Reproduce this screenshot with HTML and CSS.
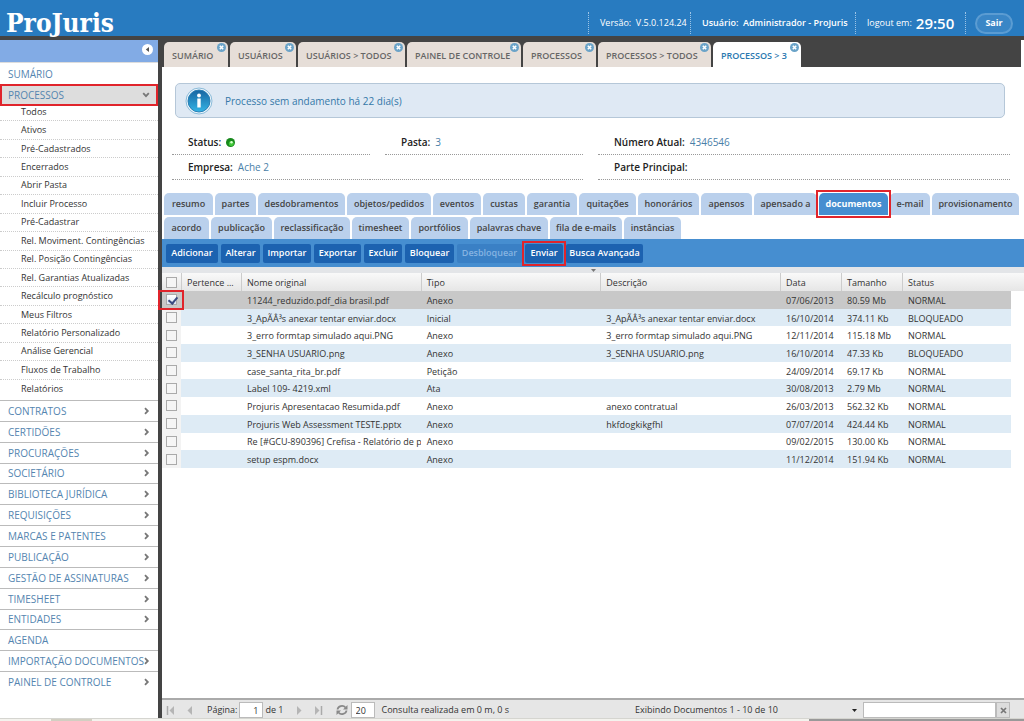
FILE: index.html
```html
<!DOCTYPE html>
<html lang="pt-BR">
<head>
<meta charset="utf-8">
<title>ProJuris</title>
<link rel="stylesheet" href="styles.css">
</head>
<body>
<svg class="defs" aria-hidden="true">
  <defs>
    <symbol id="close" viewBox="0 0 9 9"><circle cx="4.5" cy="4.5" r="4.5" fill="#6aa3c8"/><path d="M2.8 2.8l3.4 3.4M6.2 2.8L2.8 6.2" stroke="#fff" stroke-width="1.6"/></symbol>
    <symbol id="chev" viewBox="0 0 6 8"><path d="M1 1.2L3.8 4 1 6.8" fill="none" stroke="#777" stroke-width="1.8"/></symbol>
  </defs>
</svg>
<header class="top">
  <h1 class="logo">ProJuris</h1>
  <div class="top-info">
    <span class="cell version">Versão:&nbsp; V.5.0.124.24</span>
    <span class="cell user">Usuário:&nbsp; Administrador - ProJuris</span>
    <span class="cell timer">logout em: <b>29:50</b></span>
    <span class="cell exit"><button class="sair" type="button">Sair</button></span>
  </div>
</header>
<div class="shell">
  <nav class="side">
    <div class="side-top"><button class="collapse" type="button" aria-label="Recolher menu"><svg viewBox="0 0 11 11"><circle cx="5.5" cy="5.5" r="5.5" fill="#fff"/><path d="M7 3v5L3.8 5.500z" fill="#555"/></svg></button></div>
    <a class="item first" href="#">SUMÁRIO</a>
    <a class="item open" href="#">PROCESSOS<svg class="down" viewBox="0 0 8 6"><path d="M1.200 1.200L4 4.200 6.800 1.200" fill="none" stroke="#777" stroke-width="1.800"/></svg></a>
    <ul class="sub">
      <li><a href="#">Todos</a></li><li><a href="#">Ativos</a></li><li><a href="#">Pré-Cadastrados</a></li><li><a href="#">Encerrados</a></li>
      <li><a href="#">Abrir Pasta</a></li><li><a href="#">Incluir Processo</a></li><li><a href="#">Pré-Cadastrar</a></li><li><a href="#">Rel. Moviment. Contingências</a></li>
      <li><a href="#">Rel. Posição Contingências</a></li><li><a href="#">Rel. Garantias Atualizadas</a></li><li><a href="#">Recálculo prognóstico</a></li><li><a href="#">Meus Filtros</a></li>
      <li><a href="#">Relatório Personalizado</a></li><li><a href="#">Análise Gerencial</a></li><li><a href="#">Fluxos de Trabalho</a></li><li><a href="#">Relatórios</a></li>
    </ul>
    <div class="groups">
      <a class="item" href="#">CONTRATOS<svg class="chev"><use href="#chev"/></svg></a>
      <a class="item" href="#">CERTIDÕES<svg class="chev"><use href="#chev"/></svg></a>
      <a class="item" href="#">PROCURAÇÕES<svg class="chev"><use href="#chev"/></svg></a>
      <a class="item" href="#">SOCIETÁRIO<svg class="chev"><use href="#chev"/></svg></a>
      <a class="item" href="#">BIBLIOTECA JURÍDICA<svg class="chev"><use href="#chev"/></svg></a>
      <a class="item" href="#">REQUISIÇÕES<svg class="chev"><use href="#chev"/></svg></a>
      <a class="item" href="#">MARCAS E PATENTES<svg class="chev"><use href="#chev"/></svg></a>
      <a class="item" href="#">PUBLICAÇÃO<svg class="chev"><use href="#chev"/></svg></a>
      <a class="item" href="#">GESTÃO DE ASSINATURAS<svg class="chev"><use href="#chev"/></svg></a>
      <a class="item" href="#">TIMESHEET<svg class="chev"><use href="#chev"/></svg></a>
      <a class="item" href="#">ENTIDADES<svg class="chev"><use href="#chev"/></svg></a>
      <a class="item" href="#">AGENDA</a>
      <a class="item" href="#">IMPORTAÇÃO DOCUMENTOS<svg class="chev"><use href="#chev"/></svg></a>
      <a class="item" href="#">PAINEL DE CONTROLE<svg class="chev"><use href="#chev"/></svg></a>
    </div>
  </nav>
  <main class="main">
    <div class="tabs">
      <a class="tab" href="#">SUMÁRIO<svg><use href="#close"/></svg></a>
      <a class="tab" href="#">USUÁRIOS<svg><use href="#close"/></svg></a>
      <a class="tab" href="#">USUÁRIOS &gt; TODOS<svg><use href="#close"/></svg></a>
      <a class="tab" href="#">PAINEL DE CONTROLE<svg><use href="#close"/></svg></a>
      <a class="tab" href="#">PROCESSOS<svg><use href="#close"/></svg></a>
      <a class="tab" href="#">PROCESSOS &gt; TODOS<svg><use href="#close"/></svg></a>
      <a class="tab active" href="#">PROCESSOS &gt; 3<svg><use href="#close"/></svg></a>
    </div>
    <div class="notice">
      <svg class="info" viewBox="0 0 28 28"><defs><linearGradient id="ig" x1="0" y1="0" x2="0" y2="1"><stop offset="0" stop-color="#1764a0"/><stop offset="1" stop-color="#35b5e6"/></linearGradient></defs><circle cx="14" cy="14" r="13" fill="#eef6fc" stroke="#8bbbd9"/><circle cx="14" cy="14" r="11" fill="url(#ig)" stroke="#2a7fb5"/><circle cx="14" cy="8.500" r="1.900" fill="#fff"/><path d="M12.300 11.500h3.400v9h-3.400z" fill="#fff"/></svg>
      <span>Processo sem andamento há 22 dia(s)</span>
    </div>
    <dl class="facts">
      <div class="fact"><dt>Status:</dt><dd><svg class="led" viewBox="0 0 9 9"><circle cx="4.500" cy="4.500" r="4.500" fill="#17891c"/><circle cx="5.300" cy="5.500" r="2.500" fill="#43c93a"/><circle cx="5.500" cy="4.300" r="1.200" fill="#d9ffd0"/></svg></dd></div>
      <div class="fact"><dt>Pasta:</dt><dd>3</dd></div>
      <div class="fact"><dt>Número Atual:</dt><dd>4346546</dd></div>
      <div class="fact"><dt>Empresa:</dt><dd>Ache 2</dd></div>
      <div class="fact blank"></div>
      <div class="fact"><dt>Parte Principal:</dt><dd></dd></div>
    </dl>
    <div class="subtabs row1">
      <a href="#">resumo</a><a href="#">partes</a><a href="#">desdobramentos</a><a href="#">objetos/pedidos</a><a href="#">eventos</a><a href="#">custas</a><a href="#">garantia</a><a href="#">quitações</a><a href="#">honorários</a><a href="#">apensos</a><a href="#">apensado a</a><a class="on marked" href="#">documentos</a><a href="#">e-mail</a><a href="#">provisionamento</a>
    </div>
    <div class="subtabs row2">
      <a href="#">acordo</a><a href="#">publicação</a><a href="#">reclassificação</a><a href="#">timesheet</a><a href="#">portfólios</a><a href="#">palavras chave</a><a href="#">fila de e-mails</a><a href="#">instâncias</a>
    </div>
    <div class="toolbar">
      <button type="button">Adicionar</button><button type="button">Alterar</button><button type="button">Importar</button><button type="button">Exportar</button><button type="button">Excluir</button><button type="button">Bloquear</button><button type="button" disabled>Desbloquear</button><button type="button" class="marked">Enviar</button><button type="button">Busca Avançada</button>
    </div>
    <div class="grip"><svg viewBox="0 0 5 3"><path d="M0 0h5L2.500 3z" fill="#777"/></svg></div>
    <div class="grid">
      <table>
        <colgroup><col class="c-check"><col class="c-own"><col><col><col><col class="c-date"><col class="c-size"><col class="c-status"></colgroup>
        <thead><tr><th><input type="checkbox" aria-label="Selecionar todos"></th><th>Pertence ...</th><th>Nome original</th><th>Tipo</th><th>Descrição</th><th>Data</th><th>Tamanho</th><th>Status</th></tr></thead>
        <tbody>
          <tr class="sel"><td class="marked"><input type="checkbox" checked aria-label="Selecionar linha 1"></td><td></td><td>11244_reduzido.pdf_dia brasil.pdf</td><td>Anexo</td><td></td><td>07/06/2013</td><td>80.59 Mb</td><td>NORMAL</td></tr>
          <tr><td><input type="checkbox" aria-label="Selecionar linha 2"></td><td></td><td>3_ApÃÂ³s anexar tentar enviar.docx</td><td>Inicial</td><td>3_ApÃÂ³s anexar tentar enviar.docx</td><td>16/10/2014</td><td>374.11 Kb</td><td>BLOQUEADO</td></tr>
          <tr><td><input type="checkbox" aria-label="Selecionar linha 3"></td><td></td><td>3_erro formtap simulado aqui.PNG</td><td>Anexo</td><td>3_erro formtap simulado aqui.PNG</td><td>12/11/2014</td><td>115.18 Mb</td><td>NORMAL</td></tr>
          <tr><td><input type="checkbox" aria-label="Selecionar linha 4"></td><td></td><td>3_SENHA USUARIO.png</td><td>Anexo</td><td>3_SENHA USUARIO.png</td><td>16/10/2014</td><td>47.33 Kb</td><td>BLOQUEADO</td></tr>
          <tr><td><input type="checkbox" aria-label="Selecionar linha 5"></td><td></td><td>case_santa_rita_br.pdf</td><td>Petição</td><td></td><td>24/09/2014</td><td>69.17 Kb</td><td>NORMAL</td></tr>
          <tr><td><input type="checkbox" aria-label="Selecionar linha 6"></td><td></td><td>Label 109- 4219.xml</td><td>Ata</td><td></td><td>30/08/2013</td><td>2.79 Mb</td><td>NORMAL</td></tr>
          <tr><td><input type="checkbox" aria-label="Selecionar linha 7"></td><td></td><td>Projuris Apresentacao Resumida.pdf</td><td>Anexo</td><td>anexo contratual</td><td>26/03/2013</td><td>562.32 Kb</td><td>NORMAL</td></tr>
          <tr><td><input type="checkbox" aria-label="Selecionar linha 8"></td><td></td><td>Projuris Web Assessment TESTE.pptx</td><td>Anexo</td><td>hkfdogkikgfhl</td><td>07/07/2014</td><td>424.44 Kb</td><td>NORMAL</td></tr>
          <tr><td><input type="checkbox" aria-label="Selecionar linha 9"></td><td></td><td>Re [#GCU-890396] Crefisa - Relatório de per</td><td>Anexo</td><td></td><td>09/02/2015</td><td>130.00 Kb</td><td>NORMAL</td></tr>
          <tr><td><input type="checkbox" aria-label="Selecionar linha 10"></td><td></td><td>setup espm.docx</td><td>Anexo</td><td></td><td>11/12/2014</td><td>151.94 Kb</td><td>NORMAL</td></tr>
        </tbody>
      </table>
    </div>
    <footer class="pager">
      <button type="button" aria-label="Primeira"><svg viewBox="0 0 10 9"><path d="M1.500 0v9" stroke="#aaa" stroke-width="1.500"/><path d="M8 0v9L3.500 4.500z" fill="#b5b5b5"/></svg></button>
      <button type="button" aria-label="Anterior"><svg viewBox="0 0 10 9"><path d="M7 0v9L2.500 4.500z" fill="#b5b5b5"/></svg></button>
      <label class="pg">Página: <input class="page-no" type="text" value="1"></label><span class="of">de 1</span>
      <button type="button" aria-label="Próxima"><svg viewBox="0 0 10 9"><path d="M3 0v9L7.500 4.500z" fill="#b5b5b5"/></svg></button>
      <button type="button" aria-label="Última"><svg viewBox="0 0 10 9"><path d="M8.500 0v9" stroke="#aaa" stroke-width="1.500"/><path d="M2 0v9L6.500 4.500z" fill="#b5b5b5"/></svg></button>
      <button class="refresh" type="button" aria-label="Atualizar"><svg viewBox="0 0 12 12"><path d="M1.500 5.500a4.500 4 0 0 1 8-2M10.500 6.500a4.500 4 0 0 1-8 2" fill="none" stroke="#888" stroke-width="1.800"/><path d="M11.500 1v4.500H7zM.500 11V6.500H5z" fill="#888"/></svg></button>
      <input class="size" type="text" value="20" aria-label="Itens por página">
      <span class="query">Consulta realizada em 0 m, 0 s</span>
      <span class="count">Exibindo Documentos 1 - 10 de 10</span>
      <button class="drop" type="button" aria-label="Campo de busca"><svg viewBox="0 0 5 3"><path d="M0 0h5L2.500 3z" fill="#222"/></svg></button>
      <input class="search" type="text" aria-label="Buscar"><button class="clear" type="button" aria-label="Limpar"><svg viewBox="0 0 7 7"><path d="M1 1l5 5M6 1L1 6" stroke="#777" stroke-width="1.700"/></svg></button>
    </footer>
  </main>
</div>
<div class="edge"></div>
</body>
</html>
```
FILE: styles.css
```css
* { box-sizing: border-box; }
body {
  margin: 0;
  min-height: 100vh;
  display: flex;
  flex-direction: column;
  background: #fff;
  color: #333;
  font: 9px/12px "Open Sans", "Noto Sans", sans-serif;
}
a { color: inherit; text-decoration: none; }
button, input { font: inherit; margin: 0; }
button { padding: 0; border: 0; background: none; color: inherit; }
svg { display: block; }
.defs { position: absolute; width: 0; height: 0; }

.top {
  display: flex;
  justify-content: space-between;
  height: 40px;
  padding-left: 6px;
  background: #287bc0;
  border-bottom: 4px solid #444;
  color: #fff;
}
.logo { margin: 0; padding-top: 7px; font: bold 26px/32px "DejaVu Serif Condensed", "DejaVu Serif", serif; }
.top-info { display: flex; align-items: flex-end; font-weight: 600; padding-bottom: 2px; }
.cell { display: flex; align-items: center; height: 22px; border-left: 1px dotted #9cc4e6; white-space: nowrap; }
.version { width: 102px; padding-left: 11px; font-weight: 500; }
.user { width: 165px; padding-left: 11px; }
.timer { width: 110px; padding-left: 11px; gap: 4px; font-weight: 500; }
.timer b { font-size: 15px; font-weight: 600; }
.exit { width: 59px; padding-left: 9px; }
.sair { width: 38px; height: 21px; border: 2px solid #5b9cd2; border-radius: 11px; background: #3a86c6; font-weight: 700; }

.shell { flex: 1; display: flex; }
.side { width: 162px; flex: none; border-right: 4px solid #444; }
.side-top { display: flex; justify-content: flex-end; align-items: center; height: 23px; padding: 0 5px 3px 0; background: #82abe5; border-bottom: 1px solid #ddd; }
.collapse svg { width: 11px; height: 11px; }
.item { display: flex; align-items: center; justify-content: space-between; padding: 0 8px; color: #5485b0; font-size: 10px; border-top: 1px solid #bbb; white-space: nowrap; }
.first { height: 21px; border: 0; }
.open { position: relative; height: 22px; border: 0; background: #ddd; outline: 2px solid #e0242b; outline-offset: -2px; }
.down { width: 8px; height: 6px; }
.chev { width: 6px; height: 8px; }
.sub { display: grid; grid-auto-rows: 1fr; min-height: 297px; margin: -3px 0 0; padding: 0 0 2px; list-style: none; }
.sub li { display: flex; align-items: center; padding-left: 21px; border-bottom: 1px dotted #ccc; }
.sub li:last-child { border: 0; }
.groups { display: grid; grid-auto-rows: 1fr; min-height: 292px; }

.main { flex: 1; min-width: 0; display: flex; flex-direction: column; }
.tabs { display: grid; grid-template-columns: 64px 66px 107px 114px 73px 113px 88px; gap: 2px; padding: 2px 0 0 2px; margin-right: 3px; background: #444; }
.tab { position: relative; display: flex; align-items: center; height: 25px; padding: 2px 0 0 8px; border-radius: 5px 5px 0 0; background: #e6ded8; color: #666; font-weight: 600; white-space: nowrap; }
.tab.active { background: #fff; color: #2a78b0; }
.tab svg { position: absolute; top: 1px; right: 2px; width: 9px; height: 9px; }

.notice { display: flex; align-items: center; gap: 12px; height: 35px; margin: 16px 19px 0 13px; padding-left: 9px; border: 1px solid #b5c7d8; border-radius: 5px; background: #dfe9f4; color: #3478a8; font-size: 10px; }
.info { width: 28px; height: 28px; }
.facts { display: grid; grid-template-columns: 198px 198px 1fr; column-gap: 15px; margin: 12px 14px 0 10px; font-size: 10px; }
.fact { display: flex; align-items: center; gap: 5px; height: 25px; padding-left: 16px; border-bottom: 1px dotted #999; }
.blank { margin-left: -15px; }
.fact dt { color: #222; font-weight: 600; }
.fact dd { margin: 0; color: #4a80a8; font-weight: 500; }
.led { width: 9px; height: 9px; }

.marked { position: relative; z-index: 1; }
.marked::after { content: ""; position: absolute; inset: -3px; border: 2px solid #e0242b; }

.subtabs { display: grid; column-gap: 2px; padding-left: 2px; white-space: nowrap; }
.subtabs a { display: flex; align-items: center; justify-content: center; height: 22px; border-radius: 5px 5px 0 0; background: #bad0ec; color: #444; font-weight: 600; }
.row1 { margin-top: 13px; grid-template-columns: 49px 41px 87px 84px 48px 42px 50px 57px 61px 51px 63px 69px 40px 87px; }
.row2 { margin-top: 2px; grid-template-columns: 45px 61px 76px 57px 57px 78px 72px 57px; }
.subtabs .on { background: #468ed0; color: #fff; font-weight: 700; }

.toolbar { display: grid; grid-template-columns: 52px 39px 48px 47px 38px 49px 65px 38px 77px; align-items: center; column-gap: 3px; height: 28px; padding-left: 4px; background: #468ed0; }
.toolbar button { height: 19px; border-radius: 2px; background: #1c62b0; color: #fff; font-weight: 600; }
.toolbar button:disabled { background: #3a80c5; color: #86b4e2; }
.grip { display: flex; justify-content: center; height: 6px; padding-top: 2px; background: #e3e5e8; }
.grip svg { width: 5px; height: 3px; }

.grid { flex: 1; padding-right: 13px; background: linear-gradient(#f9f9f9, #e6e6e6) top / 100% 18px no-repeat; }
table { width: 100%; height: 195px; table-layout: fixed; border-collapse: separate; border-spacing: 0; }
.c-check { width: 19px; }
.c-own { width: 60px; }
.c-date, .c-size { width: 61px; }
.c-status { width: 109px; }
th, td { padding: 2px 0 0 6px; overflow: hidden; white-space: nowrap; text-align: left; font-weight: 400; }
th { height: 18px; padding: 2px 0 0 5px; border-left: 1px solid #ccc; }
th:first-child, td:first-child { padding: 0 0 0 4px; border-left: 0; }
tbody td:first-child { background: #f3f3f3; }
tbody tr:nth-child(even) { background: #deebf5; }
tbody .sel, tbody .sel td:first-child { background: #c8c8c8; }
.sel .marked { overflow: visible; }
.sel .marked::after { inset: -1px -3px -1px -4px; }
td input, th input { display: block; width: 11px; height: 11px; appearance: none; border: 1px solid #aaa; background: #f5f5f5; }
td input:checked { background: #fff linear-gradient(#fff, #dce6f5); }
td input:checked::after { content: ""; display: block; width: 4px; height: 7px; margin: 0 0 0 3px; border: solid #3a4a80; border-width: 0 2px 2px 0; transform: rotate(40deg); }

.pager { display: flex; align-items: center; height: 20px; padding: 2px 14px 0 4px; border-top: 2px solid #aaa; background: #e6e6e6; }
.pager button svg { width: 10px; height: 9px; margin-right: 9px; }
.pager input { height: 16px; border: 1px solid #bbb; background: #fff; color: #333; padding: 0 4px; }
.pg { display: flex; align-items: center; gap: 2px; margin-left: 3px; }
.pager .page-no { width: 24px; text-align: right; }
.of { margin: 0 10px 0 2px; }
.pager .refresh { margin-left: 4px; }
.pager .refresh svg { width: 12px; height: 12px; margin-right: 3px; }
.pager .size { width: 24px; }
.query { margin-left: 7px; }
.count { margin-left: auto; margin-right: 74px; }
.pager .drop svg { width: 5px; height: 3px; margin-right: 6px; }
.pager .search { width: 133px; }
.pager .clear { width: 14px; height: 16px; border: 1px solid #bbb; background: #ddd; }
.pager .clear svg { width: 7px; height: 7px; margin: 0 auto; }
.edge { height: 3px; border-top: 1px solid #d5d5d0; background: linear-gradient(90deg, #f4f3ee 5%, #d2cfc2 5% 9%, #f4f3ee 9% 79%, #999 79%); }
```
